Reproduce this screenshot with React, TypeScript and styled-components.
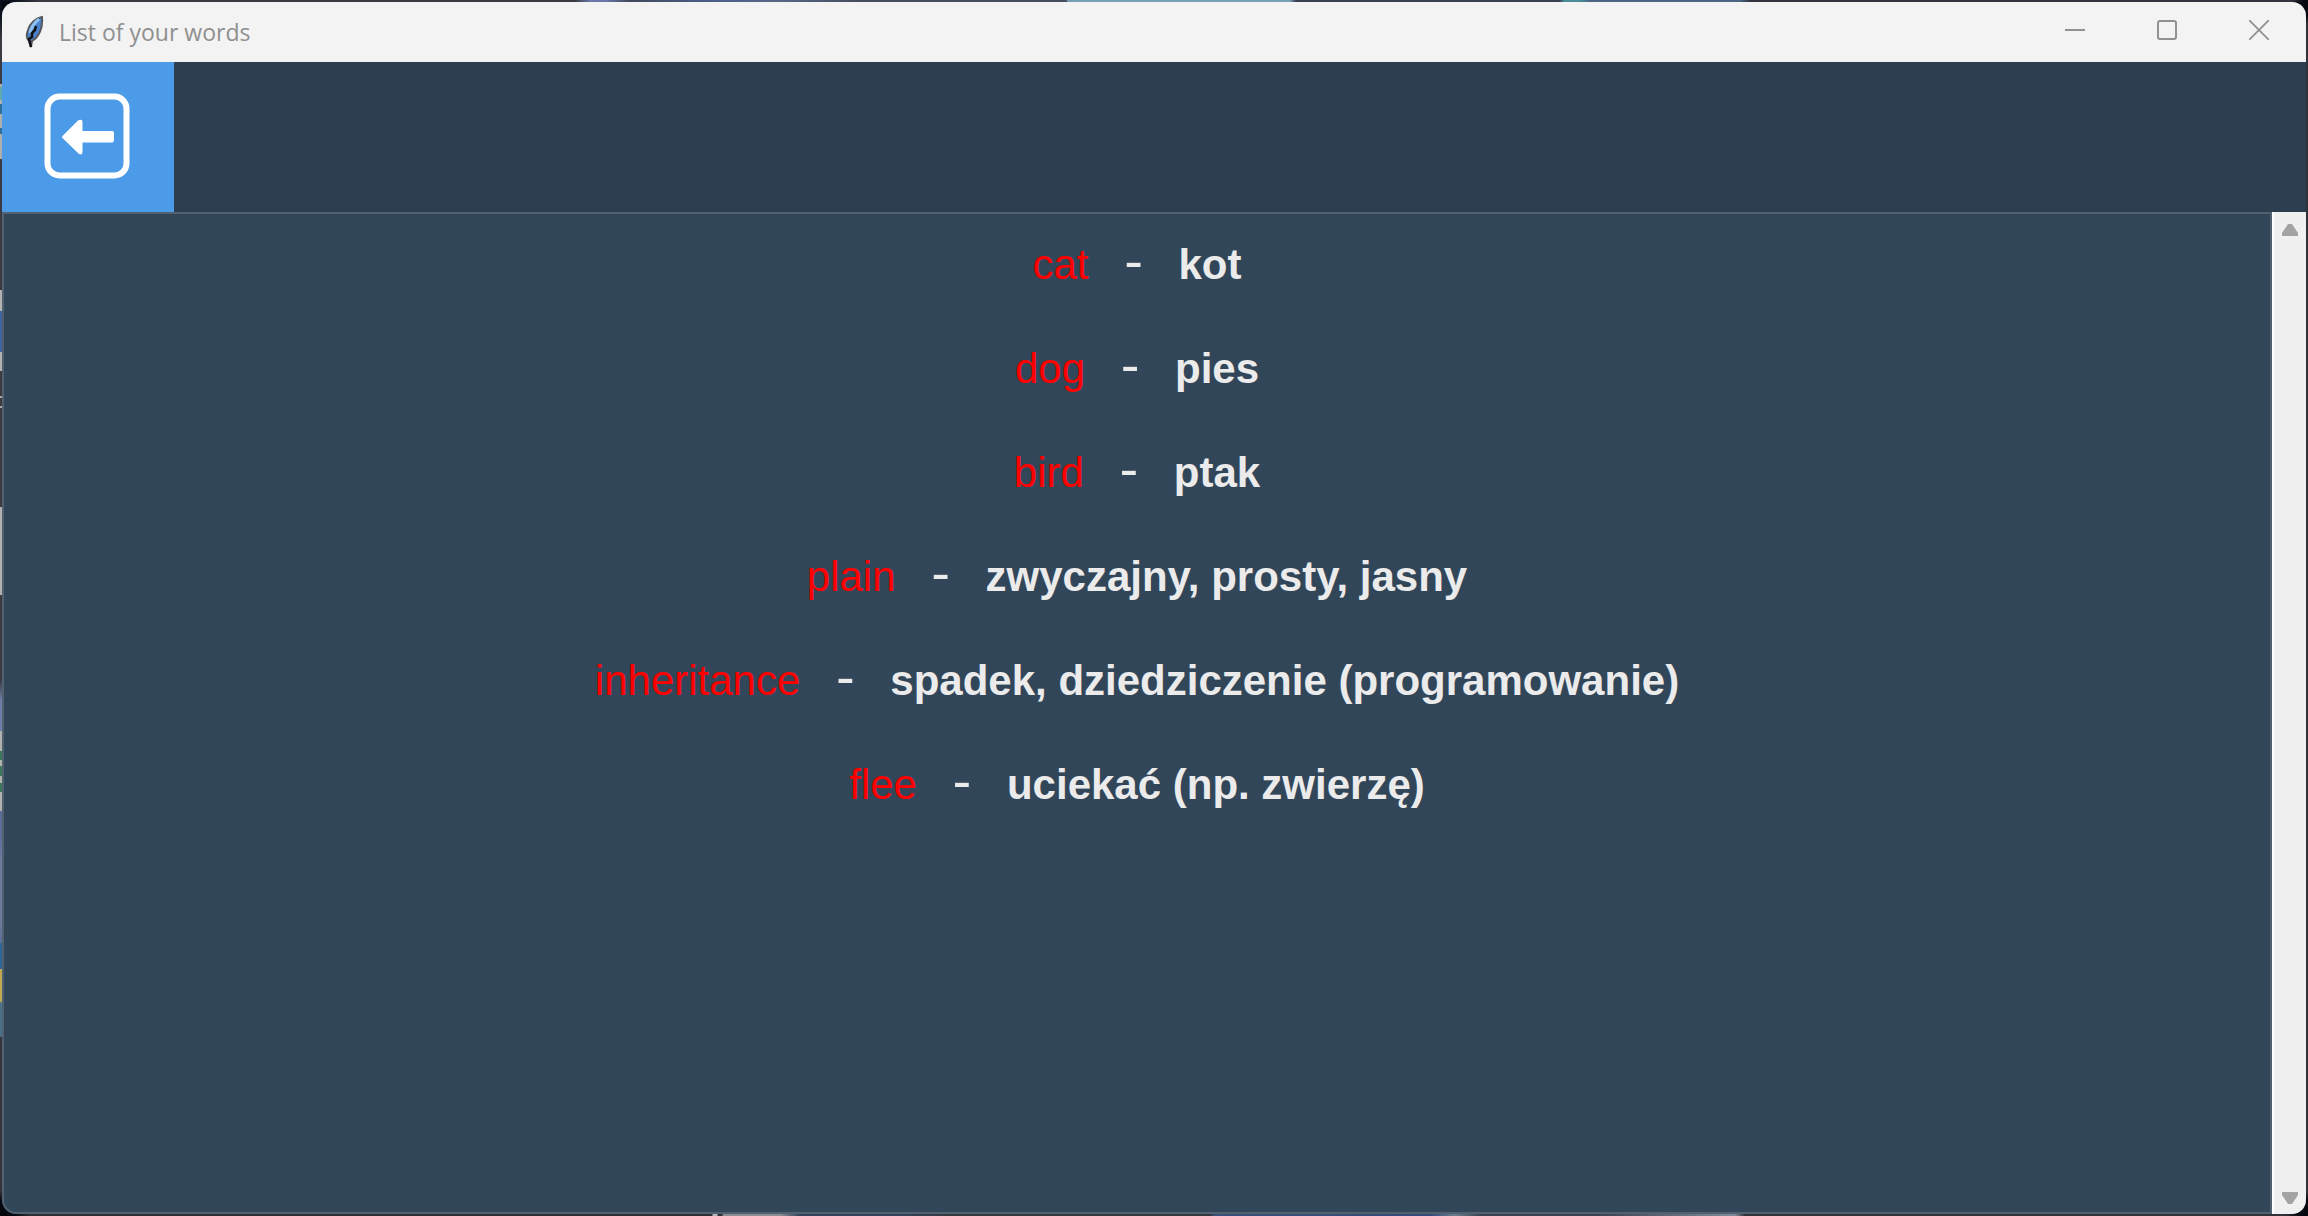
import React from 'react';
import styled, { createGlobalStyle } from 'styled-components';

const GlobalStyle = createGlobalStyle`
  *, *::before, *::after { box-sizing: border-box; }
  html, body, #root { height: 100%; }
  body { margin: 0; background: #14181f; }
`;

const Desktop = styled.div`
  height: 100%;
  padding: 2px;
  background:
    linear-gradient(
      180deg,
      #0c111c 14px, #3a3c42 40px 84px, #a9aaa6 84px 87px, #5fa9ae 87px 100px, #aeb0ae 100px 104px,
      #2f7098 104px 114px, #aeb0ae 114px 128px, #2f7098 128px 134px, #aeb0ae 134px 159px,
      #393b41 159px 290px, #b0b3af 290px 311px, #3f649f 311px 352px, #b0b3af 352px 371px,
      #393b41 371px 396px, #a9aaa9 396px 398px, #393b41 398px 406px, #a9aaa9 406px 408px,
      #393b41 408px 507px, #b0b2ad 507px 595px, #393b41 595px 680px, #6d7da5 700px 731px,
      #b0b2ad 731px 751px, #3f7558 751px 760px, #b0b2ad 760px 766px, #3f7558 766px 776px,
      #b0b2ad 776px 783px, #3f7558 783px 792px, #b0b2ad 792px 811px, #5b6d98 811px 835px,
      #6d7ba0 860px 920px, #5a6e93 943px, #2f6699 943px 969px, #c0a852 969px 1001px,
      #4a7088 1003px 1037px, #34363c 1037px 1190px, #05080e 1202px
    ) left / 2px 100% no-repeat,
    linear-gradient(
      90deg,
      #0c111c 14px, #3a3c44 40px 575px, #6a78a8 590px 605px, #40495c 630px, #4c5f8a 710px,
      #566785 780px, #454d5f 860px 1066px, #78a0b4 1068px 1290px, #3a4150 1296px 1560px,
      #4a8c98 1564px 1580px, #4a6684 1590px 1740px, #33363f 1750px 2290px, #05080e 2304px
    ) top / 100% 2px no-repeat,
    linear-gradient(
      90deg,
      #05080e 14px, #2c2f35 30px 712px, #b4b8bc 713px 717px, #2c2f35 718px 722px, #8b8d94 723px 780px,
      #33435c 800px 900px, #34393f 950px 1210px, #3a5076 1215px, #344a78 1430px, #6a808f 1455px,
      #3b4354 1480px 1600px, #7f8b9c 1735px, #303239 1745px 2285px, #05080e 2300px
    ) bottom / 100% 2px no-repeat,
    linear-gradient(180deg, #05080e 16px, #303239 24px calc(100% - 24px), #05080e calc(100% - 16px));
`;

const Window = styled.div`
  display: flex;
  flex-direction: column;
  height: 100%;
  overflow: hidden;
  border-radius: 14px;
  background: #32465a;
`;

const TitleBar = styled.header`
  display: flex;
  flex: none;
  align-items: center;
  height: 60px;
  padding: 0 1px 0 22px;
  background: #f3f3f3;
`;

const Title = styled.h1`
  flex: 1;
  margin: 0 0 0 13px;
  color: #8f8f8f;
  font: 400 23px/32px 'Open Sans', 'Noto Sans', sans-serif;
`;

const WindowButton = styled.button`
  display: flex;
  justify-content: center;
  width: 92px;
  height: 60px;
  padding: 18px 0 0;
  border: 0;
  background: transparent;
  color: #919191;
`;

const ToolBar = styled.nav`
  flex: none;
  height: 150px;
  background: #2c3e50;
`;

const BackButton = styled.button`
  display: flex;
  align-items: center;
  justify-content: center;
  width: 172px;
  height: 150px;
  padding: 0 2px 2px 0;
  border: 0;
  background: #4c9be8;
`;

const Body = styled.div`
  display: flex;
  flex: 1;
  min-height: 0;
`;

const Words = styled.main`
  flex: 1;
  padding: 23px 0;
  border: 2px solid #526170;
  border-bottom-left-radius: 14px;
`;

const WordList = styled.ul`
  display: grid;
  gap: 56px;
  margin: 0;
  padding: 0;
  list-style: none;
  font: 42px/48px 'Liberation Sans', Arial, sans-serif;
`;

const WordRow = styled.li`
  display: flex;
  align-items: baseline;
  justify-content: center;
  height: 48px;
`;

const Foreign = styled.span`
  color: #ff0000;
`;

const Dash = styled.span`
  width: 90px;
  text-align: center;
  color: #ebebeb;
  font-family: 'DejaVu Sans', sans-serif;
  font-size: 52px;
`;

const Translation = styled.span`
  color: #ebebeb;
  font-weight: 700;
`;

const ScrollBar = styled.div`
  display: flex;
  flex-direction: column;
  justify-content: space-between;
  width: 34px;
  border-left: 2px solid #ffffff;
  background: #f0f0f0;
`;

const ScrollButton = styled.button`
  display: flex;
  justify-content: center;
  height: 34px;
  padding: 12px 0 0;
  border: 0;
  background: transparent;
  color: #a3a3a3;
`;

const words = [
  ['cat', 'kot'],
  ['dog', 'pies'],
  ['bird', 'ptak'],
  ['plain', 'zwyczajny, prosty, jasny'],
  ['inheritance', 'spadek, dziedziczenie (programowanie)'],
  ['flee', 'uciekać (np. zwierzę)'],
];

const Feather = () => (
  <svg width="22" height="34" viewBox="0 0 22 34" aria-hidden="true">
    <path d="M18 2C12 3 6 8 4 15c-2 5-2 8 1 11l2 6 1-6c7-4 11-13 10-24z" fill="#4a84cf" stroke="#55585c" strokeWidth="2" />
    <path d="M15 4C10 8 7 12 6 18" fill="none" stroke="#8ec0ee" strokeWidth="3" />
    <path d="M12 11l-1 4-3 3v4l-3 2 2 8" fill="none" stroke="#111" strokeWidth="2.5" />
  </svg>
);

const BackArrow = () => (
  <svg width="86" height="86" viewBox="0 0 86 86" aria-hidden="true">
    <rect x="3.5" y="3.5" width="79" height="79" rx="12" fill="none" stroke="#fff" strokeWidth="6" />
    <path d="M18 43.500L34 27.500Q38.500 25.500 38.500 29V38H68Q70 38 70 40V47Q70 49.500 68 49.500H38.500V59Q38.500 62.500 35 61L19 45.500Q17.500 44.500 18 43.500Z" fill="#fff" />
  </svg>
);

export default function App() {
  return (
    <Desktop>
      <GlobalStyle />
      <Window>
        <TitleBar>
          <Feather />
          <Title>List of your words</Title>
          <WindowButton aria-label="Minimize">
            <svg width="20" height="20"><path d="M0 10h20" stroke="currentColor" strokeWidth="2" /></svg>
          </WindowButton>
          <WindowButton aria-label="Maximize">
            <svg width="20" height="20"><rect x="1" y="1" width="18" height="18" rx="2" fill="none" stroke="currentColor" strokeWidth="2" /></svg>
          </WindowButton>
          <WindowButton aria-label="Close">
            <svg width="20" height="20"><path d="M0 0l20 20M20 0L0 20" stroke="currentColor" strokeWidth="1.8" /></svg>
          </WindowButton>
        </TitleBar>
        <ToolBar>
          <BackButton aria-label="Back"><BackArrow /></BackButton>
        </ToolBar>
        <Body>
          <Words>
            <WordList>
              {words.map(([foreign, translation]) => (
                <WordRow key={foreign}>
                  <Foreign>{foreign}</Foreign>
                  <Dash>-</Dash>
                  <Translation>{translation}</Translation>
                </WordRow>
              ))}
            </WordList>
          </Words>
          <ScrollBar>
            <ScrollButton aria-label="Scroll up">
              <svg width="16" height="12"><path d="M6 0h4l6 9v3H0V9z" fill="currentColor" /></svg>
            </ScrollButton>
            <ScrollButton aria-label="Scroll down">
              <svg width="16" height="12"><path d="M6 12h4l6-9V0H0v3z" fill="currentColor" /></svg>
            </ScrollButton>
          </ScrollBar>
        </Body>
      </Window>
    </Desktop>
  );
}
